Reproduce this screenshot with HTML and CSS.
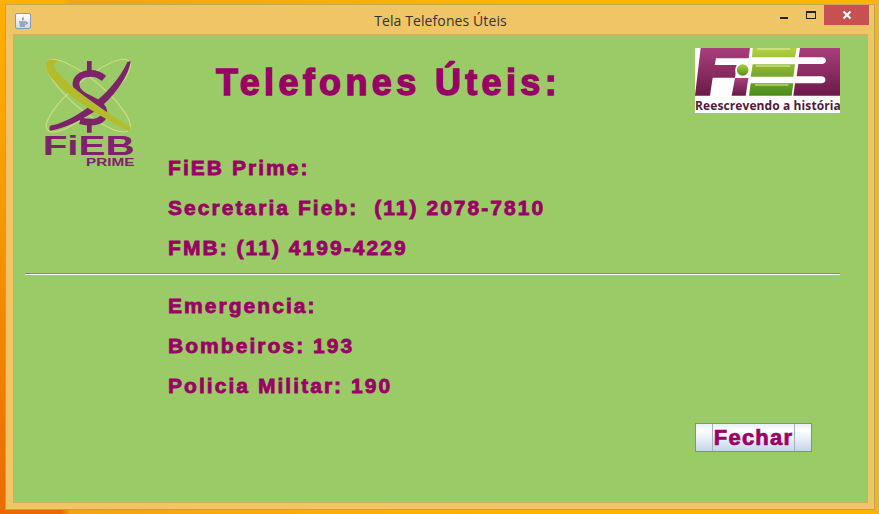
FILE: index.html
```html
<!DOCTYPE html>
<html>
<head>
<title>Tela Telefones Úteis</title>
<link rel="stylesheet" href="styles.css">
</head>
<body>

<div class="window">
  <div class="titlebar">
    <div class="app-icon">
      <svg width="14" height="14" viewBox="0 0 14 14">
        <path d="M8 1 C6 3 9 4 7 7 C6 5.5 5.5 4.5 7 3 Z" fill="#e2702a"/>
        <path d="M3 8 H10 M3.5 10 H9.5 M4 12 H9" stroke="#4a7391" stroke-width="1" fill="none"/>
        <path d="M10 8 Q13 8.5 10 10.5" stroke="#4a7391" stroke-width="1" fill="none"/>
      </svg>
    </div>
    <div class="title">Tela Telefones Úteis</div>
    <div class="win-buttons">
      <div class="win-btn"><span class="min-icon"></span></div>
      <div class="win-btn"><span class="max-icon"></span></div>
      <div class="win-btn close-btn">
        <svg width="10" height="10" viewBox="0 0 10 10"><path d="M1.5 1.5 L8.5 8.5 M8.5 1.5 L1.5 8.5" stroke="#fff" stroke-width="2"/></svg>
      </div>
    </div>
  </div>

  <div class="panel">
    <div class="top">
      <div class="prime-logo">
        <svg width="120" height="125" viewBox="0 0 360 375">
          <ellipse cx="175" cy="137" rx="160" ry="46" transform="rotate(40 175 137)" fill="none" stroke="#d6dc8a" stroke-width="3"/>
          <ellipse cx="175" cy="137" rx="160" ry="46" transform="rotate(-40 175 137)" fill="none" stroke="#d6dc8a" stroke-width="3"/>
          <path d="M178 33 V72 M178 212 V248" stroke="#7b2468" stroke-width="14" fill="none"/>
          <path d="M222 85 C190 58 135 70 138 105 C142 150 222 145 222 190 C222 215 190 222 150 212" stroke="#7b2468" stroke-width="20" fill="none"/>
          <path d="M302 33 C298 72 258 135 208 174 C162 208 105 236 60 242 C56 232 60 224 68 226 C112 216 168 182 212 142 C250 108 282 62 292 36 Z" fill="#7b2468"/>
          <path d="M48 38 C52 26 72 26 88 35 C66 36 66 50 90 76 C140 128 232 188 302 232 L298 244 C220 206 128 150 80 100 C58 80 44 58 48 38 Z" fill="#b3bd2c"/>
          <text class="prime-name" x="38" y="315" textLength="276" lengthAdjust="spacingAndGlyphs">FiEB</text>
          <text class="prime-sub" x="168" y="347" textLength="145" lengthAdjust="spacingAndGlyphs">PRIME</text>
        </svg>
      </div>
      <div class="info">
        <h1 class="heading">Telefones Úteis:</h1>
        <div class="lines">
          <p class="line">FiEB Prime:</p>
          <p class="line">Secretaria Fieb:&nbsp; (11) 2078-7810</p>
          <p class="line">FMB: (11) 4199-4229</p>
        </div>
      </div>
      <div class="fieb-logo">
        <svg class="fieb-mark" width="145" height="49" viewBox="45 144 435 147">
          <defs>
            <linearGradient id="purple" x1="0" y1="0" x2="0" y2="1">
              <stop offset="0" stop-color="#a93f7c"/>
              <stop offset="1" stop-color="#6b1a48"/>
            </linearGradient>
            <linearGradient id="lime" x1="0" y1="0" x2="0" y2="1">
              <stop offset="0" stop-color="#b5d040"/>
              <stop offset="1" stop-color="#4c8c1c"/>
            </linearGradient>
          </defs>
          <path d="M62 144 H210 L206 175 H108 L104 195 H170 L165 233 H98 L90 287 H45 Z" fill="url(#purple)"/>
          <path d="M165 234 H205 L197 287 H155 Z" fill="url(#purple)"/>
          <circle cx="188" cy="210" r="20" fill="url(#lime)" stroke="#fff" stroke-width="5"/>
          <path d="M218 144 H350 L345 172 H216 Z M218 193 H345 L340 230 H212 Z M212 250 H340 L335 287 H207 Z" fill="url(#lime)"/>
          <path d="M232 147 H330 M228 198 H330 M225 255 H325" stroke="#e8f0b8" stroke-width="3" fill="none"/>
          <path d="M360 144 H480 V287 H340 L345 250 H425 Q438 248 436 238 Q434 229 425 229 H350 L355 192 H428 Q440 188 438 180 Q436 172 428 172 H356 Z" fill="url(#purple)"/>
        </svg>
        <div class="fieb-slogan">Reescrevendo a história</div>
      </div>
    </div>

    <div class="divider"></div>

    <div class="lines lower">
      <p class="line">Emergencia:</p>
      <p class="line">Bombeiros: 193</p>
      <p class="line">Policia Militar: 190</p>
    </div>

    <div class="actions">
      <button type="button" class="close-action"><span class="close-label">Fechar</span></button>
    </div>
  </div>
</div>

</body>
</html>
```

FILE: styles.css
```css
body {
  margin: 0;
  width: 879px;
  height: 514px;
  overflow: hidden;
  background:
    linear-gradient(90deg, rgba(255, 180, 0, 0) 0%, rgba(255, 180, 0, 0) 7%, rgba(240, 165, 20, 1) 8%, #ffb400 60%),
    linear-gradient(#ffb000 0%, #f59a00 40%, #ea6a00 100%);
  font-family: "Liberation Sans", Arial, sans-serif;
  padding: 4px 4px 4px 5px;
  box-sizing: border-box;
}

.window {
  height: 506px;
  box-sizing: border-box;
  background-color: #f0c566;
  border: 1px solid #b8a26a;
  border-top-color: #c9a758;
  padding: 0 6px 6px 7px;
  display: flex;
  flex-direction: column;
}

.titlebar {
  height: 30px;
  display: flex;
  align-items: center;
  position: relative;
  flex-shrink: 0;
}

.app-icon {
  width: 14px;
  height: 14px;
  margin: 2px 0 0 2px;
  background: linear-gradient(#ffffff, #cfdcea);
  border: 1px solid #7f9db9;
  border-radius: 2px;
}

.title {
  position: absolute;
  left: 0;
  right: 0;
  text-align: center;
  font-size: 14px;
  letter-spacing: 0.1px;
  color: #333;
  font-family: "Open Sans", sans-serif;
}

.win-buttons {
  margin: 0 -1px 0 auto;
  align-self: flex-start;
  display: flex;
  position: relative;
}

.win-btn {
  width: 27px;
  height: 20px;
  display: flex;
  align-items: center;
  justify-content: center;
}

.min-icon {
  width: 8px;
  height: 2px;
  background-color: #222;
  margin-top: 6px;
}

.max-icon {
  width: 8px;
  height: 5px;
  border: 1px solid #222;
  border-top-width: 2px;
}

.close-btn {
  width: 45px;
  background-color: #c75050;
}

.panel {
  flex: 1;
  background-color: #9bcb67;
  border: 1px solid #d0b060;
  box-sizing: border-box;
  display: flex;
  flex-direction: column;
  margin-top: -1px;
}

.top {
  display: flex;
}

.prime-logo {
  width: 154px;
  padding: 15px 0 0 16px;
  box-sizing: border-box;
  height: 100px;
}

.prime-name {
  font-size: 84px;
  font-weight: bold;
  fill: #7b2468;
}

.prime-sub {
  font-size: 30px;
  font-weight: bold;
  fill: #7b2468;
}

.info {
  flex: 1;
}

.heading {
  margin: 28px 0 0 48px;
  font-size: 36px;
  line-height: 40px;
  letter-spacing: 4.35px;
  color: #990066;
  -webkit-text-stroke: 1.4px #990066;
}

.lines {
  margin-top: 45px;
}

.line {
  margin: 0;
  font-size: 21px;
  line-height: 40px;
  font-weight: bold;
  letter-spacing: 2.05px;
  color: #990066;
  -webkit-text-stroke: 0.8px #990066;
}

.fieb-logo {
  width: 145px;
  height: 65px;
  margin: 13px 27px 0 0;
  background-color: #fff;
  overflow: hidden;
}

.fieb-mark {
  display: block;
}

.fieb-slogan {
  font-family: "Open Sans", sans-serif;
  font-size: 12px;
  font-weight: bold;
  line-height: 16px;
  letter-spacing: 0.1px;
  white-space: nowrap;
  color: #4e1a3c;
  padding-top: 1px;
}

.divider {
  height: 1px;
  margin: 5px 27px 0 11px;
  background-color: #6f86c4;
  border-bottom: 1px solid #ffffff;
}

.lower {
  margin: 11px 0 0 154px;
}

.actions {
  display: flex;
  justify-content: flex-end;
  margin: 17px 55px 0 0;
}

.close-action {
  width: 117px;
  height: 29px;
  padding: 0;
  border: 1px solid #7a8ea6;
  background: linear-gradient(#e8eff7 0%, #ffffff 25%, #c5d5e8 100%);
  display: flex;
  justify-content: center;
}

.close-label {
  display: block;
  width: 81px;
  height: 27px;
  border-left: 1px solid #9fb2c8;
  border-right: 1px solid #9fb2c8;
  font-family: "Liberation Sans", Arial, sans-serif;
  font-size: 22px;
  line-height: 27px;
  font-weight: bold;
  letter-spacing: 1.2px;
  color: #990066;
  -webkit-text-stroke: 0.7px #990066;
  white-space: nowrap;
}
```
